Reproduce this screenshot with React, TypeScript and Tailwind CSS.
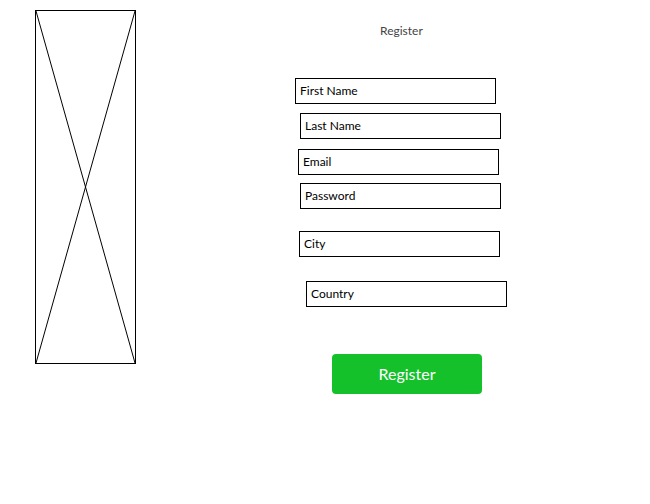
import React from "react";

const fields: { label: string; cls: string }[] = [
  { label: "First Name", cls: "mt-[39px] ml-0" },
  { label: "Last Name", cls: "mt-[9px] ml-[5px]" },
  { label: "Email", cls: "mt-[10px] ml-[3px]" },
  { label: "Password", cls: "mt-[8px] ml-[5px]" },
  { label: "City", cls: "mt-[22px] ml-[4px]" },
  { label: "Country", cls: "mt-[24px] ml-[11px]" },
];

export default function App() {
  return (
    <div
      className="w-[650px] h-[504px] bg-white flex items-start"
      style={{ fontFamily: "Lato, 'Open Sans', sans-serif" }}
    >
      <div className="ml-[35px] mt-[10px] w-[101px] h-[354px] border border-black shrink-0">
        <svg width="99" height="352" viewBox="0 0 99 352" className="block">
          <line x1="0" y1="0" x2="99" y2="352" stroke="black" strokeWidth="1" />
          <line x1="99" y1="0" x2="0" y2="352" stroke="black" strokeWidth="1" />
        </svg>
      </div>
      <div className="ml-[159px] flex flex-col items-start">
        <div className="mt-[23px] ml-[85px] text-[12px] leading-[16px] text-[#444]">Register</div>
        {fields.map((f) => (
          <div
            key={f.label}
            className={`w-[201px] h-[26px] border border-black flex items-center pl-[4px] text-[12px] text-black ${f.cls}`}
          >
            {f.label}
          </div>
        ))}
        <button className="mt-[47px] ml-[37px] w-[150px] h-[40px] rounded-[4px] bg-[#14c12a] text-white text-[16px] flex items-center justify-center">
          Register
        </button>
      </div>
    </div>
  );
}
